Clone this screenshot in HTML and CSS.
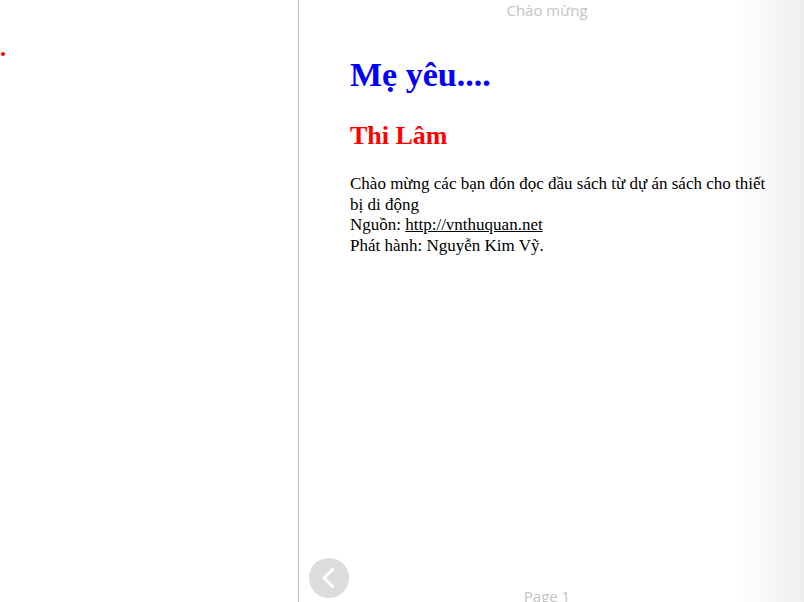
FILE: index.html
```html
<!DOCTYPE html>
<html lang="vi">
<head>
<meta charset="utf-8">
<title>Mẹ yêu....</title>
<link rel="stylesheet" href="styles.css">
</head>
<body>
<div class="reader">
  <aside class="left-pane">
    <span class="marker"></span>
  </aside>
  <main class="page">
    <header class="page-header">Chào mừng</header>
    <section class="content">
      <h1 class="title">Mẹ yêu....</h1>
      <h2 class="author">Thi Lâm</h2>
      <p class="intro">Chào mừng các bạn đón đọc đầu sách từ dự án sách cho thiết bị di động<br>Nguồn: <a href="#">http://vnthuquan.net</a><br>Phát hành: Nguyễn Kim Vỹ.</p>
    </section>
    <footer class="page-footer">Page 1</footer>
    <button class="nav-back" aria-label="Trang trước">
      <svg viewBox="0 0 40 40" width="40" height="40"><path d="M23.5 11.5 L15 20 L23.5 28.5" fill="none" stroke="#fff" stroke-width="3" stroke-linecap="round" stroke-linejoin="round"/></svg>
    </button>
  </main>
</div>
</body>
</html>
```
FILE: styles.css
```css
html, body {
  margin: 0;
  padding: 0;
  background: #fff;
}
.reader {
  display: flex;
  width: 804px;
  height: 602px;
  overflow: hidden;
}
.left-pane {
  width: 298px;
  flex: none;
  border-right: 1px solid #bdbdbd;
  padding-top: 52px;
  box-sizing: content-box;
}
.marker {
  display: block;
  width: 4px;
  height: 4px;
  margin-left: 1px;
  border-radius: 50%;
  background: #f00;
}
.page {
  flex: 1;
  position: relative;
  display: flex;
  flex-direction: column;
  background: linear-gradient(to right, #fff 0, #fff 436px, #f0f0f0 500px, #ececec 505px);
}
.page-header {
  font-family: "Open Sans", sans-serif;
  font-size: 15px;
  line-height: 20px;
  color: #c4c4c4;
  text-align: center;
  padding-right: 9px;
}
.content {
  flex: 1;
  padding-left: 51px;
  width: 424px;
  font-family: "Liberation Serif", "Times New Roman", serif;
}
.title {
  margin: 35px 0 0;
  font-size: 34px;
  line-height: 40px;
  font-weight: bold;
  color: #0000ff;
}
.author {
  margin: 26px 0 0;
  font-size: 26px;
  line-height: 30px;
  font-weight: bold;
  color: #ff0000;
}
.intro {
  margin: 23px 0 0;
  font-size: 17px;
  line-height: 20.7px;
  color: #000;
}
.intro a {
  color: #000;
  text-decoration: underline;
}
.page-footer {
  font-family: "Open Sans", sans-serif;
  font-size: 15px;
  line-height: 22px;
  height: 17px;
  overflow: visible;
  color: #c4c4c4;
  text-align: center;
  padding-right: 9px;
}
.nav-back {
  position: absolute;
  left: 10px;
  bottom: 4px;
  width: 40px;
  height: 40px;
  padding: 0;
  border: none;
  border-radius: 50%;
  background: #dcdcdc;
  display: flex;
  align-items: center;
  justify-content: center;
}
.nav-back svg {
  display: block;
}
```
